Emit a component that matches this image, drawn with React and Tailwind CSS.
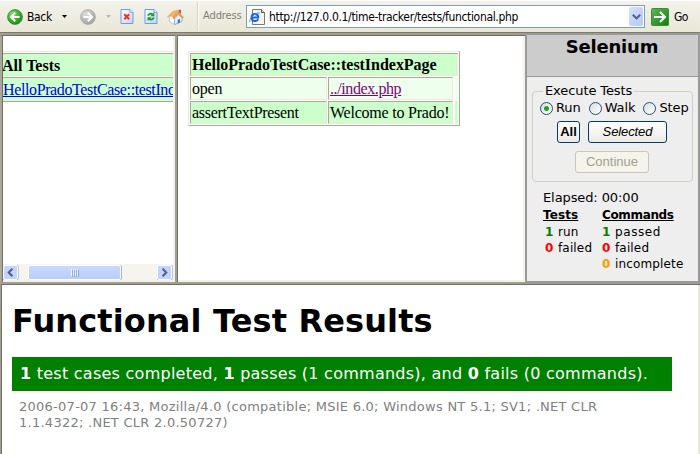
import React from "react";

const serif = "font-['Liberation_Serif','Times_New_Roman',serif]";
const verdana = "font-['DejaVu_Sans',Verdana,sans-serif]";
const tahoma = "font-['DejaVu_Sans_Condensed','DejaVu_Sans',Tahoma,sans-serif] [font-stretch:condensed]";

function NavArrow({ back }) {
  return (
    <svg width="16" height="16" viewBox="0 0 16 16" className="shrink-0">
      <defs>
        <radialGradient id={back ? "gb" : "gf"} cx="35%" cy="30%" r="80%">
          <stop offset="0" stopColor={back ? "#8fdc7c" : "#dededb"} />
          <stop offset="0.55" stopColor={back ? "#38ae2b" : "#b9b9b7"} />
          <stop offset="1" stopColor={back ? "#168016" : "#999998"} />
        </radialGradient>
      </defs>
      <circle cx="8" cy="8" r="7.4" fill={back ? "url(#gb)" : "url(#gf)"} stroke={back ? "#2c8e24" : "#aaaaa8"} strokeWidth="0.8" />
      <path
        d={back ? "M8.2 3.8 L4 8 L8.2 12.2 M4.4 8 H12.6" : "M7.8 3.8 L12 8 L7.8 12.2 M11.6 8 H3.4"}
        fill="none"
        stroke="#fff"
        strokeWidth="2"
      />
    </svg>
  );
}

function Caret({ color }) {
  return (
    <svg width="5" height="3" viewBox="0 0 5 3" className="shrink-0">
      <path d="M0 0H5L2.5 3Z" fill={color} />
    </svg>
  );
}

function PageIcon({ children }) {
  return (
    <svg width="14" height="15" viewBox="0 0 14 15" className="shrink-0">
      <defs>
        <linearGradient id="page" x1="0" y1="0" x2="1" y2="1">
          <stop offset="0" stopColor="#fff" />
          <stop offset="1" stopColor="#bcd3fa" />
        </linearGradient>
      </defs>
      <path d="M1 .5H10L13 3.5V14.5H1Z" fill="url(#page)" stroke="#7599d8" />
      <path d="M10 .5V3.5H13" fill="#e9f1ff" stroke="#7599d8" strokeWidth="0.8" />
      {children}
    </svg>
  );
}

function Home() {
  return (
    <svg width="17" height="16" viewBox="0 0 17 16" className="shrink-0">
      <path d="M2.5 8 L6 4 L13 9 V12 L8 15.5 L2.5 12.5Z" fill="#fff" stroke="#8daee0" strokeWidth="0.6" />
      <path d="M7.5 10 L11.5 5.5 L15 9 V12.5 L7.5 15.6Z" fill="#e6effd" stroke="#7b9fd7" strokeWidth="0.8" />
      <path d="M10.7 10.8 L13 9.9 V13.4 L10.7 14.4Z" fill="#416fb9" />
      <path d="M.6 8 L5.6 2.8 L10.6 1.2 L6.4 8.4 L3.6 6.6Z" fill="#f9b567" stroke="#e08f35" strokeWidth="0.6" />
      <path d="M6 9.8 L11 3.6 L16.3 9" fill="none" stroke="#ef9a3e" strokeWidth="1.8" />
      <path d="M11.5 .8H14V5L11.5 3Z" fill="#c45b46" />
    </svg>
  );
}

function IePage() {
  return (
    <svg width="17" height="16" viewBox="0 0 17 16" className="shrink-0">
      <path d="M3.5 .5H12.5L15.5 3.5V15.5H3.5Z" fill="#f4f4ee" stroke="#777" />
      <path d="M12.5 .5V3.5H15.5" fill="#ddd" stroke="#555" />
      <path d="M9.2 10.2 C8 13 2.5 12.7 2.5 8.4 C2.5 3.7 9.5 3.7 9.2 8.4 H3.5" fill="none" stroke="#1c62d4" strokeWidth="2" />
      <path d="M1 13 C-.8 10.5 6 3.2 10.8 3.8" fill="none" stroke="#4a90ee" strokeWidth="1" />
    </svg>
  );
}

function Toolbar() {
  return (
    <div className={`flex h-8 shrink-0 items-center border-t border-white bg-gradient-to-b from-[#f3f2ec] to-[#e9e7d6] text-black ${tahoma}`}>
      <div className="flex items-center pl-[7px]">
        <NavArrow back />
        <span className="ml-1 w-[27px] whitespace-nowrap text-[12px] tracking-[-0.35px]">Back</span>
        <span className="ml-2 flex"><Caret color="#000" /></span>
        <span className="ml-[13px] flex"><NavArrow /></span>
        <span className="ml-[10px] flex"><Caret color="#bab8ae" /></span>
        <span className="ml-[9px] flex">
          <PageIcon>
            <path d="M4.3 5.3 L9.2 10.2 M9.2 5.3 L4.3 10.2" stroke="#ee3312" strokeWidth="2" />
          </PageIcon>
        </span>
        <span className="ml-[10px] flex">
          <PageIcon>
            <path d="M4 6.6 C4.5 4.6 7 4.2 8.4 5.2 M9.8 8.4 C9.3 10.6 6.8 11 5.4 10" fill="none" stroke="#159a20" strokeWidth="1.8" />
            <path d="M10.3 3.3V7.3H6.4Z M3.6 12.2V8.2H7.5Z" fill="#159a20" />
          </PageIcon>
        </span>
        <span className="ml-[9px] flex"><Home /></span>
      </div>
      <div className="ml-[14px] h-[29px] w-px bg-white shadow-[-1px_0_0_#d8d5c6]" />
      <span className="ml-1 w-[39px] whitespace-nowrap text-[11px] tracking-[-0.1px] text-[#7f7c73]">Address</span>
      <div className="ml-1 flex h-[23px] w-[399px] items-center border border-[#7f9db9] bg-white pl-[2px]">
        <IePage />
        <span className="ml-[3px] flex-1 whitespace-nowrap text-[12px] tracking-[-0.34px]">http://127.0.0.1/time-tracker/tests/functional.php</span>
        <span className="mr-px flex h-[19px] w-[14px] items-center justify-center rounded-[2px] bg-gradient-to-br from-[#d5e1fd] to-[#b3c8f7]">
          <svg width="9" height="6" viewBox="0 0 9 6"><path d="M.8 .8L4.5 4.4L8.2 .8" fill="none" stroke="#4d6185" strokeWidth="2" /></svg>
        </span>
      </div>
      <svg width="18" height="18" viewBox="0 0 18 18" className="ml-[6px] shrink-0">
        <defs>
          <linearGradient id="go" x1="0" y1="0" x2="1" y2="1">
            <stop offset="0" stopColor="#62b75c" />
            <stop offset="1" stopColor="#078107" />
          </linearGradient>
        </defs>
        <rect x=".5" y=".5" width="17" height="17" rx="1" fill="url(#go)" stroke="#3b8e37" />
        <path d="M3 9H14 M9 4L14 9L9 14" fill="none" stroke="#fff" strokeWidth="2" />
      </svg>
      <span className="ml-[5px] text-[12px] tracking-[-0.6px]">Go</span>
    </div>
  );
}

function ScrollButton({ left }) {
  return (
    <span className="flex h-[15px] w-[15px] items-center justify-center rounded-[2px] border border-white bg-[#c3d3fc] shadow-[0_1px_0_#9db5e4,1px_0_0_#b5c7ee]">
      <svg width="7" height="9" viewBox="0 0 7 9">
        <path d={left ? "M5.4 .8L1.7 4.5L5.4 8.2" : "M1.6 .8L5.3 4.5L1.6 8.2"} fill="none" stroke="#4d6185" strokeWidth="2" />
      </svg>
    </span>
  );
}

function TestList() {
  return (
    <div className="flex w-[172px] shrink-0 flex-col overflow-hidden border-b-2 border-r-2 border-[#f4f2e8] bg-white">
      <div className={`mt-[15px] h-[53px] overflow-hidden whitespace-nowrap border-t border-[#ece9d8] text-[16px] ${serif}`}>
        <div className="-ml-px mt-px h-[23px] border-t border-[#aca899] bg-[#ccffcc] font-bold leading-[23px]">All Tests</div>
        <div className="mt-px h-[25px] border-y border-[#aca899] bg-[#ccffcc] leading-[23px] tracking-[-0.38px] text-[#0000ee] underline">HelloPradoTestCase::testIndexPage</div>
      </div>
      <div className="mt-auto flex h-[16px] items-center bg-[#f5f4ef]">
        <ScrollButton left />
        <span className="ml-[10px] flex h-[15px] w-[93px] items-center justify-center gap-px rounded-[2px] border border-white bg-gradient-to-b from-[#cad8fe] to-[#b9cdfb] shadow-[0_1px_0_#9db5e4,1px_0_0_#98b1e4]">
          {[0, 1, 2, 3].map((i) => (
            <i key={i} className="h-[7px] w-px bg-[#f0f5ff] shadow-[1px_1px_0_#8faae8]" />
          ))}
        </span>
        <span className="ml-auto mr-px flex"><ScrollButton /></span>
      </div>
    </div>
  );
}

const cell = "border border-b-[#ece9d8] border-l-[#aca899] border-r-[#ece9d8] border-t-[#aca899] pl-px whitespace-nowrap";

function TestCase() {
  return (
    <div className="h-full w-[347px] overflow-hidden border-b-2 border-r-2 border-[#f4f2e8] bg-white pl-[10px] pt-[15px]">
      <div className={`flex h-[75px] w-[272px] flex-col gap-px border border-b-[#aca899] border-l-[#ece9d8] border-r-[#aca899] border-t-[#ece9d8] p-px text-[16px] leading-[22px] ${serif}`}>
        <div className={`h-[23px] bg-[#ccffcc] font-bold ${cell}`}>
          <span className="tracking-[-0.03px]">HelloPradoTestCase::testIndexPage</span>
        </div>
        <div className="flex h-[23px] gap-px">
          <div className={`w-[137px] bg-[#eeffee] tracking-[-0.2px] ${cell}`}>open</div>
          <div className={`w-[125px] bg-[#eeffee] tracking-[-0.4px] text-[#800080] underline ${cell}`}>../index.php</div>
          <div className="ml-px w-[3px] bg-[#eeffee]" />
        </div>
        <div className="flex h-[23px] gap-px">
          <div className={`w-[137px] bg-[#ccffcc] tracking-[-0.3px] ${cell}`}>assertTextPresent</div>
          <div className={`w-[125px] bg-[#ccffcc] tracking-[-0.22px] ${cell}`}>Welcome to Prado!</div>
          <div className="ml-px w-[3px] bg-[#ccffcc]" />
        </div>
      </div>
    </div>
  );
}

function Radio({ label, on }) {
  return (
    <span className="flex items-center gap-[3px]">
      <span className="flex h-[13px] w-[13px] items-center justify-center rounded-full border border-[#1c5180] bg-gradient-to-br from-[#dcdcd7] to-white">
        {on && <i className="h-[5px] w-[5px] rounded-full bg-[#21a121]" />}
      </span>
      {label}
    </span>
  );
}

const button = "flex items-center justify-center rounded-[3px] border font-['Liberation_Sans',Arial,sans-serif]";

function Count({ n, color, label, spacing = "tracking-[0.15px]" }) {
  return (
    <div className="flex h-4 gap-[5px] whitespace-nowrap leading-4">
      <b className={`w-[8px] ${color}`}>{n}</b>
      <span className={spacing}>{label}</span>
    </div>
  );
}

function Selenium() {
  return (
    <div className={`flex h-[250px] w-[175px] shrink-0 flex-col border-2 border-[#999] bg-[#eee] text-[12px] ${verdana}`}>
      <div className="h-[42px] shrink-0 border-b border-[#999] bg-[#ccc] pr-px text-center text-[18px] font-bold leading-[24px] tracking-[-0.2px]">Selenium</div>
      <fieldset className="mx-[5px] mt-[6px] h-[99px] shrink-0 rounded-[4px] border border-[#d0d0bf] p-0">
        <legend className="ml-[10px] h-4 whitespace-nowrap px-[2px] text-[13px] leading-4 tracking-[-0.1px]">Execute Tests</legend>
        <div className="mt-px flex h-4 items-center gap-[8px] whitespace-nowrap pl-[7px] text-[13px] tracking-[-0.1px]">
          <Radio label="Run" on />
          <Radio label="Walk" />
          <Radio label="Step" />
        </div>
        <div className="mt-[5px] flex gap-2 pl-6">
          <span className={`h-[22px] w-[23px] border-[#003c74] bg-gradient-to-b from-white to-[#ecebe5] text-[13px] font-bold ${button}`}>All</span>
          <span className={`h-[22px] w-[79px] border-[#003c74] bg-gradient-to-b from-white to-[#ecebe5] text-[13px] italic tracking-[-0.1px] ${button}`}>Selected</span>
        </div>
        <div className={`ml-[42px] mt-2 h-[22px] w-[74px] border-[#c9c7ba] bg-[#f5f4ea] text-[13px] text-[#a1a192] ${button}`}>Continue</div>
      </fieldset>
      <div className="ml-[16px] mt-2 h-4 whitespace-nowrap text-[13px] leading-4 tracking-[-0.1px]">Elapsed: 00:00</div>
      <div className="ml-[16px] mt-px flex">
        <div className="w-[59px]">
          <div className="h-4 whitespace-nowrap font-bold leading-4 tracking-[0.1px] underline underline-offset-1">Tests</div>
          <div className="mt-px pl-[2px]">
            <Count n="1" color="text-[#008000]" label="run" />
            <Count n="0" color="text-[#ff0000]" label="failed" />
          </div>
        </div>
        <div>
          <div className="h-4 whitespace-nowrap font-bold leading-4 tracking-[-0.35px] underline underline-offset-1">Commands</div>
          <div className="mt-px">
            <Count n="1" color="text-[#008000]" label="passed" spacing="tracking-[0.6px]" />
            <Count n="0" color="text-[#ff0000]" label="failed" />
            <Count n="0" color="text-[#ff9900]" label="incomplete" />
          </div>
        </div>
      </div>
    </div>
  );
}

function Results() {
  return (
    <div className={`h-[169px] overflow-hidden border-r-2 border-[#ece9d8] bg-white pl-[10px] ${verdana}`}>
      <h1 className="mt-[16px] h-[40px] whitespace-nowrap text-[32px] font-bold leading-[40px] tracking-[0.13px]">Functional Test Results</h1>
      <div className="mt-4 h-[34px] w-[660px] whitespace-nowrap bg-[#008000] pl-2 text-[16px] leading-[34px] tracking-[0.255px] text-white">
        <b>1</b> test cases completed, <b>1</b> passes (1 commands), and <b>0</b> fails (0 commands).
      </div>
      <div className="ml-[7px] mt-2 whitespace-nowrap text-[13px] leading-4 tracking-[0.26px] text-[#808080]">
        <div>2006-07-07 16:43, Mozilla/4.0 (compatible; MSIE 6.0; Windows NT 5.1; SV1; .NET CLR</div>
        <div>1.1.4322; .NET CLR 2.0.50727)</div>
      </div>
    </div>
  );
}

export default function App() {
  return (
    <div className="flex h-[454px] w-[700px] flex-col overflow-hidden bg-white text-black">
      <Toolbar />
      <div className="flex h-[251px] shrink-0 border-t border-[#7d7a6e] bg-[#a29f92]">
        <div className="mb-px mt-[2px] flex w-[175px] shrink-0 border-l-2 border-t border-l-[#aca899] border-t-[#716f64]">
          <div className="w-px shrink-0 bg-[#716f64]" />
          <TestList />
        </div>
        <div className="mb-px ml-[2px] mt-[2px] flex w-[348px] shrink-0 border-l border-t border-[#716f64]">
          <TestCase />
        </div>
        <Selenium />
      </div>
      <div className="h-[171px] shrink-0 border-l border-t border-[#a29f92]">
        <div className="border-l border-t border-[#716f64]">
          <Results />
        </div>
      </div>
    </div>
  );
}
